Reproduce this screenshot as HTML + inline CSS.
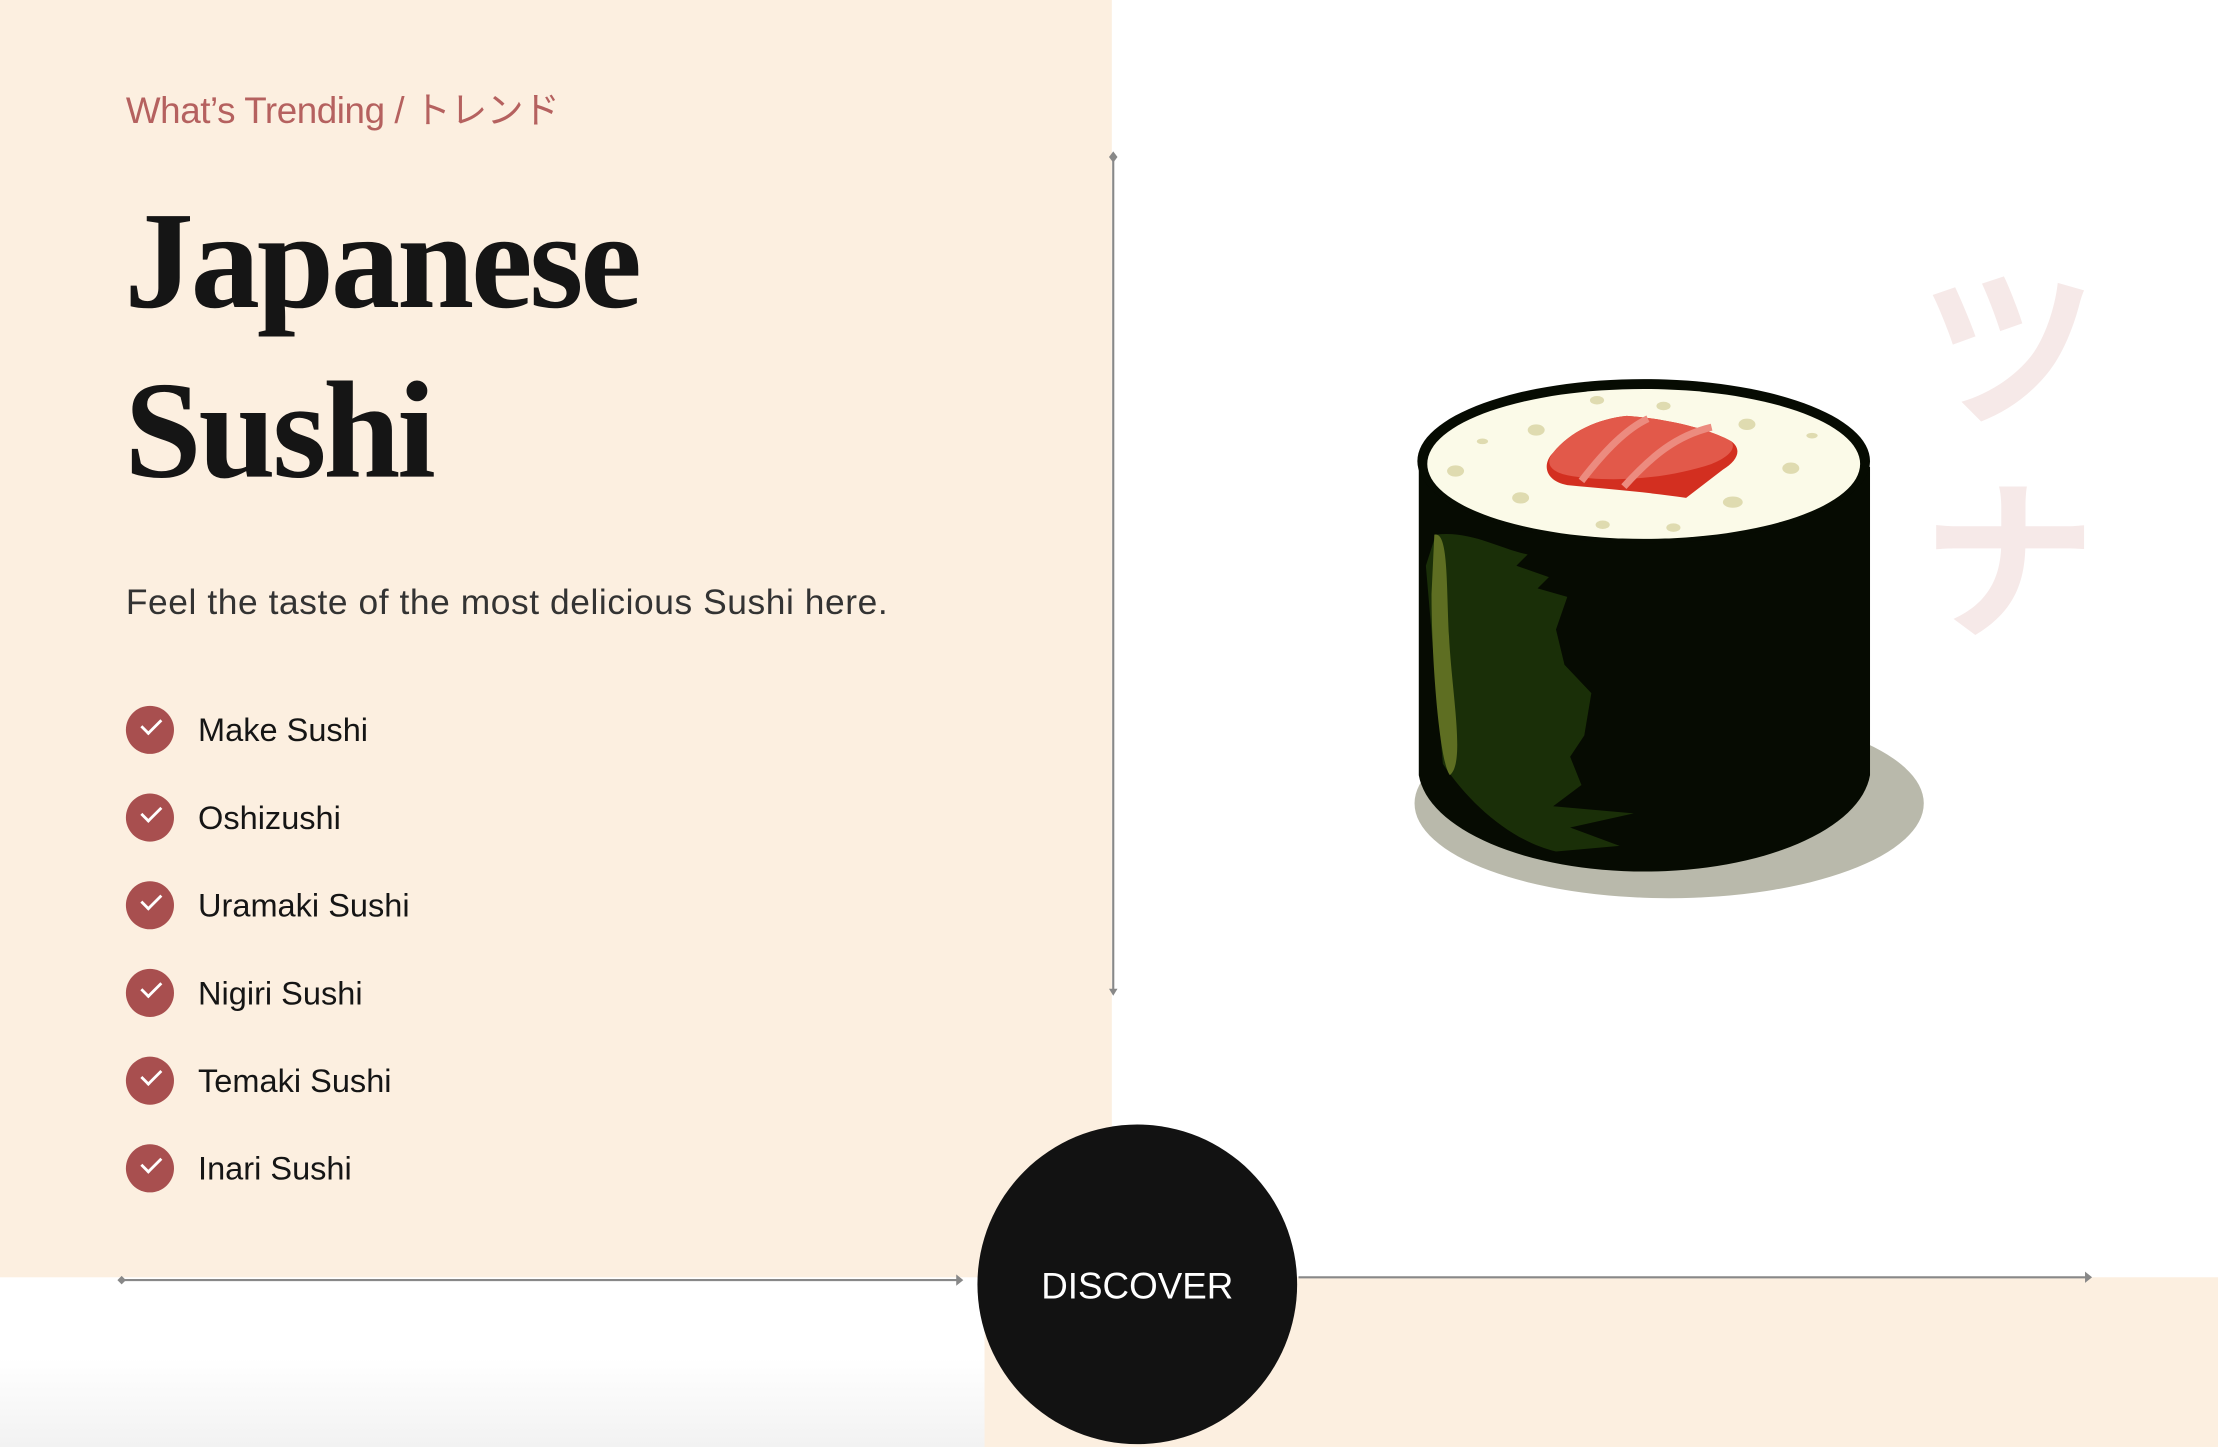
<!DOCTYPE html>
<html><head><meta charset="utf-8"><style>
html,body{margin:0;padding:0;width:2218px;height:1447px;overflow:hidden;background:#fff}
#s{position:absolute;left:0;top:0;width:1568px;height:1023px;transform:scale(1.41454,1.41447);transform-origin:0 0;background:#fff;font-family:"Liberation Sans","Noto Sans CJK JP",sans-serif}
.a{position:absolute}
.sub{left:89px;top:58px;font-size:26px;color:#b5615f;letter-spacing:-0.3px;white-space:nowrap}
.h{left:88px;font-family:"Liberation Serif",serif;font-weight:bold;font-size:98px;color:#151515;letter-spacing:-2.2px;line-height:1}
.p{left:89px;top:412px;font-size:25px;color:#333;letter-spacing:0.4px;white-space:nowrap}
.li{left:89px;height:34px;display:flex;align-items:center;font-size:23px;color:#151515;white-space:nowrap}
.li i{display:block;width:34px;height:34px;border-radius:50%;background:#a84f4f;margin-right:17px;position:relative}
.li i:after{content:"";position:absolute;left:11px;top:9px;width:12px;height:6px;border-left:2px solid #fff;border-bottom:2px solid #fff;transform:rotate(-45deg)}
.kt{font-size:124px;color:#f6e9e8;line-height:1;font-weight:bold;font-family:"Noto Sans CJK JP",sans-serif}
</style></head><body><div id="s">
<div class="a" style="left:0;top:0;width:786px;height:903px;background:#fcefe0"></div>
<div class="a" style="left:696px;top:903px;width:872px;height:120px;background:#fcefe0"></div>
<div class="a" style="left:0;top:960px;width:696px;height:63px;background:linear-gradient(#fff,#f2f2f2)"></div>
<div class="a sub">What’s Trending / トレンド</div>
<div class="a h" style="top:136px">Japanese</div>
<div class="a h" style="top:256px">Sushi</div>
<div class="a p">Feel the taste of the most delicious Sushi here.</div>
<div class="a li" style="top:499px"><i></i>Make Sushi</div>
<div class="a li" style="top:561px"><i></i>Oshizushi</div>
<div class="a li" style="top:623px"><i></i>Uramaki Sushi</div>
<div class="a li" style="top:685px"><i></i>Nigiri Sushi</div>
<div class="a li" style="top:747px"><i></i>Temaki Sushi</div>
<div class="a li" style="top:809px"><i></i>Inari Sushi</div>
<div class="a kt" style="left:1358px;top:176px">ツ</div>
<div class="a kt" style="left:1358px;top:326px">ナ</div>
<svg class="a" style="left:0;top:0" width="1568" height="1023">
<g stroke="#888" stroke-width="1.5" fill="#888">
<line x1="787" y1="111" x2="787" y2="701"/>
<path d="M784 111l3-4 3 4-3 4z M784 699h6l-3 5z" stroke="none"/>
<line x1="86" y1="905" x2="679" y2="905"/>
<path d="M83 905l3-3 3 3-3 3z M676 901v8l5-4z" stroke="none"/>
<line x1="918" y1="903" x2="1478" y2="903"/>
<path d="M1474 899v8l5-4z" stroke="none"/>
</g>
<ellipse cx="1180" cy="568" rx="180" ry="67" fill="#b9b9ab"/>
<path d="M1003 330 V548 A160 74 0 0 0 1322 548 V330 Z" fill="#060b02"/>
<path d="M1015 378 C1040 375 1060 388 1080 392 L1072 400 L1095 408 L1087 416 L1108 422 L1100 445 L1106 470 L1125 490 L1120 520 L1110 535 L1118 555 L1098 570 L1155 575 L1110 585 L1145 598 L1100 602 C1070 595 1040 570 1020 540 L1008 400 Z" fill="#1a2f08"/>
<path d="M1014 378 C1025 375 1022 420 1025 460 C1028 500 1035 540 1025 548 C1018 540 1012 470 1012 420 Z" fill="#5e6e22"/>
<ellipse cx="1162" cy="326" rx="160" ry="58" fill="#060b02"/>
<ellipse cx="1162" cy="328" rx="153" ry="53" fill="#fbfae8"/>
<g fill="#dfdbb0"><ellipse cx="1086" cy="304" rx="6" ry="4"/><ellipse cx="1129" cy="283" rx="5" ry="3"/><ellipse cx="1176" cy="287" rx="5" ry="3"/><ellipse cx="1235" cy="300" rx="6" ry="4"/><ellipse cx="1266" cy="331" rx="6" ry="4"/><ellipse cx="1225" cy="355" rx="7" ry="4"/><ellipse cx="1183" cy="373" rx="5" ry="3"/><ellipse cx="1133" cy="371" rx="5" ry="3"/><ellipse cx="1075" cy="352" rx="6" ry="4"/><ellipse cx="1029" cy="333" rx="6" ry="4"/><ellipse cx="1048" cy="312" rx="4" ry="2"/><ellipse cx="1281" cy="308" rx="4" ry="2"/></g>
<path d="M1098 320 C1110 305 1130 296 1150 294 C1180 296 1210 304 1224 312 C1232 318 1228 326 1218 332 L1192 352 C1165 348 1140 346 1108 343 C1092 340 1090 328 1098 320 Z" fill="#d32f20"/>
<path d="M1098 320 C1110 305 1130 296 1150 294 C1180 296 1210 304 1224 312 C1228 318 1220 324 1210 328 C1180 338 1140 342 1108 336 C1094 333 1093 326 1098 320 Z" fill="#e2594a"/>
<path d="M1118 340 C1135 318 1150 303 1165 296 M1148 344 C1168 322 1185 308 1210 302" stroke="#ec8b7f" stroke-width="5" fill="none"/>
<circle cx="804" cy="908" r="113" fill="#121212"/>
<text x="804" y="918" font-family="Liberation Sans,sans-serif" font-size="26" fill="#fff" text-anchor="middle">DISCOVER</text>
</svg>
</div></body></html>
